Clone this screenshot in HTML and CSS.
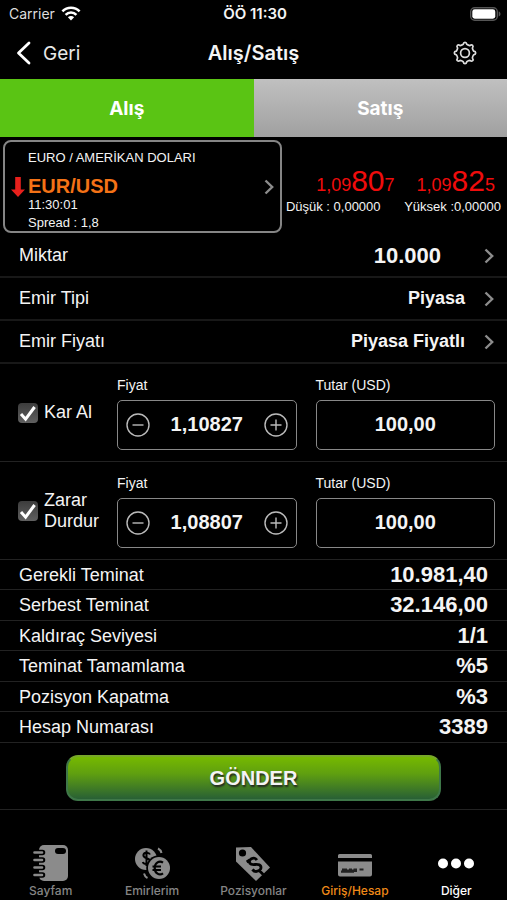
FILE: index.html
```html
<!DOCTYPE html>
<html lang="tr">
<head>
<meta charset="utf-8">
<meta name="viewport" content="width=device-width, initial-scale=1">
<title>Alış/Satış</title>
<link rel="stylesheet" href="styles.css">
</head>
<body>
<div class="status">
  <div class="carrier">Carrier
    <svg width="20" height="15" viewBox="0 0 20 15" fill="none" stroke="#fff" stroke-width="2.6"><path d="M1.4 5.4C6.2.6 13.8.6 18.6 5.4M4.6 8.8c3-3 7.8-3 10.8 0"/><path d="M10 14.4 6.9 11.3c1.7-1.7 4.5-1.7 6.2 0z" fill="#fff" stroke="none"/></svg>
  </div>
  <div class="clock">ÖÖ 11:30</div>
  <svg class="battery" width="31" height="14" viewBox="0 0 31 14"><rect x=".7" y=".7" width="26.6" height="12.6" rx="4" fill="none" stroke="#555" stroke-width="1.4"/><rect x="2.3" y="2.3" width="23" height="9.4" rx="2.4" fill="#fff"/><path d="M28.7 4.6c2.4.6 2.4 4.2 0 4.8z" fill="#555"/></svg>
</div>
<header class="nav">
  <a class="back" href="#"><svg width="15" height="24" viewBox="0 0 15 24" fill="none" stroke="#fff" stroke-width="2.8" stroke-linecap="round" stroke-linejoin="round"><path d="M13 2 2.5 12 13 22"/></svg>Geri</a>
  <h1>Alış/Satış</h1>
  <button class="settings" type="button" aria-label="Ayarlar">
    <svg width="24" height="24" viewBox="0 0 24 24" fill="none" stroke="#ddd" stroke-width="1.7" stroke-linejoin="round"><circle cx="12" cy="12" r="4.4"/><path d="M10.200 3.300Q10.500 1.300 12 1.300Q13.500 1.300 13.800 3.300Q15.300 4.400 16.900 4.600Q18.500 3.400 19.600 4.400Q20.600 5.500 19.400 7.100Q19.600 8.700 20.700 10.200Q22.700 10.500 22.700 12Q22.700 13.500 20.700 13.800Q19.600 15.300 19.400 16.900Q20.600 18.500 19.600 19.600Q18.500 20.600 16.900 19.400Q15.300 19.600 13.800 20.700Q13.500 22.700 12 22.700Q10.500 22.700 10.200 20.700Q8.700 19.600 7.100 19.400Q5.500 20.600 4.400 19.600Q3.400 18.500 4.600 16.900Q4.400 15.300 3.300 13.800Q1.300 13.500 1.300 12Q1.300 10.500 3.300 10.200Q4.400 8.700 4.600 7.100Q3.400 5.500 4.400 4.400Q5.500 3.400 7.100 4.600Q8.700 4.400 10.200 3.300Z"/></svg>
  </button>
</header>
<div class="sides">
  <button class="side buy" type="button">Alış</button>
  <button class="side sell" type="button">Satış</button>
</div>
<main>
  <section class="quote">
    <button class="pair" type="button">
      <svg class="down" width="14" height="20" viewBox="0 0 14 20" fill="#e8201c"><path d="M4.2 0h5.600v12.500H14L7 20 0 12.500h4.200z"/></svg>
      <span class="details">
        <span class="name">EURO / AMERİKAN DOLARI</span>
        <span class="symbol">EUR/USD</span>
        <span class="time">11:30:01</span>
        <span class="spread">Spread : 1,8</span>
      </span>
      <svg class="chev" width="10" height="16" viewBox="0 0 10 16"><path d="M1.500 1.500 8.200 8l-6.700 6.500"/></svg>
    </button>
    <div class="prices">
      <div class="rates"><span>1,09<b>80</b>7</span><span>1,09<b>82</b>5</span></div>
      <div class="limits"><span>Düşük : 0,00000</span><span>Yüksek :0,00000</span></div>
    </div>
  </section>

  <button class="option" type="button"><span>Miktar</span><strong class="amount">10.000</strong><svg class="chev" width="10" height="16" viewBox="0 0 10 16"><path d="M1.500 1.500 8.200 8l-6.700 6.500"/></svg></button>
  <button class="option" type="button"><span>Emir Tipi</span><strong>Piyasa</strong><svg class="chev" width="10" height="16" viewBox="0 0 10 16"><path d="M1.500 1.500 8.200 8l-6.700 6.500"/></svg></button>
  <button class="option" type="button"><span>Emir Fiyatı</span><strong>Piyasa Fiyatlı</strong><svg class="chev" width="10" height="16" viewBox="0 0 10 16"><path d="M1.500 1.500 8.200 8l-6.700 6.500"/></svg></button>

  <section class="trigger">
    <label class="toggle"><span class="box"><input type="checkbox" checked><svg width="20" height="20" viewBox="0 0 20 20"><path d="m3 11 4.600 5.200L16.600 4"/></svg></span>Kar Al</label>
    <div class="field">
      <label for="tp-price">Fiyat</label>
      <div class="entry">
        <button type="button" aria-label="Azalt"><svg width="24" height="24" viewBox="0 0 24 24"><circle cx="12" cy="12" r="11"/><path d="M6.500 12h11"/></svg></button>
        <input id="tp-price" type="text" value="1,10827">
        <button type="button" aria-label="Artır"><svg width="24" height="24" viewBox="0 0 24 24"><circle cx="12" cy="12" r="11"/><path d="M6.500 12h11M12 6.500v11"/></svg></button>
      </div>
    </div>
    <div class="field">
      <label for="tp-sum">Tutar (USD)</label>
      <div class="entry"><input id="tp-sum" type="text" value="100,00"></div>
    </div>
  </section>
  <section class="trigger">
    <label class="toggle"><span class="box"><input type="checkbox" checked><svg width="20" height="20" viewBox="0 0 20 20"><path d="m3 11 4.600 5.200L16.600 4"/></svg></span>Zarar Durdur</label>
    <div class="field">
      <label for="sl-price">Fiyat</label>
      <div class="entry">
        <button type="button" aria-label="Azalt"><svg width="24" height="24" viewBox="0 0 24 24"><circle cx="12" cy="12" r="11"/><path d="M6.500 12h11"/></svg></button>
        <input id="sl-price" type="text" value="1,08807">
        <button type="button" aria-label="Artır"><svg width="24" height="24" viewBox="0 0 24 24"><circle cx="12" cy="12" r="11"/><path d="M6.500 12h11M12 6.500v11"/></svg></button>
      </div>
    </div>
    <div class="field">
      <label for="sl-sum">Tutar (USD)</label>
      <div class="entry"><input id="sl-sum" type="text" value="100,00"></div>
    </div>
  </section>

  <table class="summary">
    <tr><th scope="row">Gerekli Teminat</th><td>10.981,40</td></tr>
    <tr><th scope="row">Serbest Teminat</th><td>32.146,00</td></tr>
    <tr><th scope="row">Kaldıraç Seviyesi</th><td>1/1</td></tr>
    <tr><th scope="row">Teminat Tamamlama</th><td>%5</td></tr>
    <tr><th scope="row">Pozisyon Kapatma</th><td>%3</td></tr>
    <tr><th scope="row">Hesap Numarası</th><td>3389</td></tr>
  </table>
  <div class="submit"><button type="submit">GÖNDER</button></div>
</main>
<nav class="tabs">
  <a href="#">
    <svg width="36" height="38" viewBox="0 0 36 38"><rect x="6" y="1" width="29" height="36" rx="5" fill="#8b8b8b"/><rect x="22" y="4" width="11" height="6" rx="3" fill="#000"/><g fill="none" stroke="#000" stroke-width="5.500" stroke-linecap="round"><path d="M5 8.500h4.500M5 16h4.500M5 23.500h4.500M5 31h4.500"/></g><g fill="none" stroke="#8b8b8b" stroke-width="2.600" stroke-linecap="round"><path d="M1.500 8.500H9M1.500 16H9M1.500 23.500H9M1.500 31H9"/></g></svg>
    Sayfam</a>
  <a href="#">
    <svg width="36" height="38" viewBox="0 0 36 38"><circle cx="12" cy="15" r="11" fill="#8b8b8b"/><path d="M16 10.500c-1-2.600-6.600-2.600-6.600.8 0 3.800 6.600 2 6.600 5.900 0 3.600-6.200 3.800-7.200.8M12.500 6.500v15.500" fill="none" stroke="#000" stroke-width="2"/><circle cx="25" cy="24" r="12.800" fill="#000"/><circle cx="25" cy="24" r="11" fill="#8b8b8b"/><path d="M29 18.700c-3.600-2.600-8.300 0-8.300 5.300s4.700 7.900 8.300 5.300M18.500 22.500h8.500M18.500 26h8.500" fill="none" stroke="#000" stroke-width="2.200"/><path d="M24 4.500c2 1 3 2.500 3.500 4.500M10 29.500c.5 2 1.500 3.500 3.500 4.500" fill="none" stroke="#8b8b8b" stroke-width="2"/></svg>
    Emirlerim</a>
  <a href="#">
    <svg width="36" height="38" viewBox="0 0 36 38"><path d="M1 3.500 16 3l19 20.500L21 37 1 17.500z" fill="#8b8b8b"/><circle cx="7.500" cy="9" r="3.600" fill="#000"/><path d="M22.800 14.500c-3.200-4-9.400-.2-7 3.400 2 3 8.600-1 10.600 2.600 2 4-4.600 7.800-8.200 3.500M12.500 16.500l3-2M25 25l4 4" transform="translate(-.8 1.500)" fill="none" stroke="#000" stroke-width="2.800"/></svg>
    Pozisyonlar</a>
  <a class="current" href="#">
    <svg width="36" height="38" viewBox="0 0 36 38"><path d="M1 14v-2.500A1.500 1.500 0 0 1 2.500 10h31a1.500 1.500 0 0 1 1.500 1.500V14zM1 17.500h34v13a2 2 0 0 1-2 2H3a2 2 0 0 1-2-2z" fill="#8b8b8b"/><path d="M4 26.500h1v-2h5v1h2v-1h3v1h1.500v-1H20v3.500h-3v.8H4zM22.500 24.500h4v2h-4z" fill="#222"/></svg>
    Giriş/Hesap</a>
  <a class="more" href="#">
    <svg width="36" height="38" viewBox="0 0 36 38" fill="#fff"><circle cx="5" cy="19.500" r="5"/><circle cx="18" cy="19.500" r="5"/><circle cx="31" cy="19.500" r="5"/></svg>
    Diğer</a>
</nav>
</body>
</html>
```
FILE: styles.css
```css
* { box-sizing: border-box; }

body {
  margin: 0;
  min-height: 100vh;
  display: flex;
  flex-direction: column;
  background: #000;
  color: #f4f4f4;
  font-family: "Liberation Sans", Arial, sans-serif;
}

button, input {
  margin: 0;
  padding: 0;
  border: 0;
  background: none;
  color: inherit;
  font: inherit;
}

a { color: inherit; text-decoration: none; }
svg { display: block; flex: none; }

.status, .nav, .sides, .tabs { font-family: Inter, sans-serif; }

.status {
  display: grid;
  grid-template-columns: 1fr auto 1fr;
  align-items: center;
  height: 27px;
  padding: 0 6px 0 9px;
  font-size: 14px;
  line-height: 20px;
}
.carrier { display: flex; align-items: center; gap: 6px; color: #ddd; }
.clock { font-size: 15px; font-weight: 600; }
.battery { justify-self: end; }

.nav {
  display: grid;
  grid-template-columns: 1fr auto 1fr;
  align-items: center;
  height: 52px;
  padding: 0 16px;
  font-size: 19px;
}
.back { display: flex; align-items: center; gap: 12px; color: #e8e8e8; }
.nav h1 { margin: 0; font-size: 20px; font-weight: 600; }
.settings { justify-self: end; margin-right: 14px; }

.sides { display: grid; grid-template-columns: 1fr 1fr; height: 58px; }
.side { color: #fff; font-size: 19px; font-weight: 700; }
.buy { background: #5ac414; }
.sell { background: linear-gradient(#c0c0c0, #a0a0a0); }

main { padding-top: 3px; }

.quote { display: flex; align-items: center; padding: 0 6px 0 3px; margin-bottom: 2px; }
.pair {
  flex: none;
  display: flex;
  align-items: center;
  width: 56%;
  height: 93px;
  padding: 0 6px;
  gap: 3px;
  border: 2px solid #858585;
  border-radius: 8px;
  text-align: left;
}
.details { display: flex; flex: 1; flex-direction: column; padding-top: 9px; font-size: 13px; line-height: 18px; }
.symbol { color: #f47216; font-size: 20px; font-weight: 700; line-height: 22px; margin-top: 8px; }
.time { line-height: 16px; }
.spread { line-height: 20px; }
.chev path { fill: none; stroke: #8c8c8c; stroke-width: 2.4; }

.prices { flex: 1; padding: 8px 0 0 4px; white-space: nowrap; }
.rates {
  display: flex;
  justify-content: flex-end;
  gap: 22px;
  padding-right: 6px;
  color: #f00c0c;
  font-size: 18px;
  line-height: 28px;
}
.rates b { font-size: 30px; font-weight: 400; }
.limits { display: flex; justify-content: space-between; font-size: 13px; line-height: 16px; }

.option {
  display: flex;
  align-items: center;
  width: 100%;
  height: 43px;
  padding: 0 13px 0 19px;
  border-bottom: 2px solid #181818;
  font-size: 18px;
}
.option strong { flex: 1; margin-right: 19px; text-align: right; }
.option .amount { margin-right: 43px; font-size: 22px; }

.trigger {
  display: grid;
  grid-template-columns: 80px 1fr 1fr;
  column-gap: 19px;
  align-items: center;
  height: 98px;
  padding: 0 12px 0 18px;
  border-bottom: 1px solid #222;
}
.toggle { display: flex; align-items: center; gap: 6px; font-size: 18px; line-height: 21px; }
.box { display: grid; flex: none; }
.box input, .box svg { grid-area: 1 / 1; width: 20px; height: 20px; }
.box input { appearance: none; border-radius: 4px; background: linear-gradient(#3c3c3c, #606060); }
.box svg { pointer-events: none; fill: none; stroke: #fff; stroke-width: 3; }
.field { min-width: 0; }
.field label { display: block; font-size: 14px; line-height: 18px; padding-bottom: 6px; }
.entry {
  display: flex;
  align-items: center;
  height: 50px;
  padding: 0 8px;
  border: 1px solid #888;
  border-radius: 5px;
}
.entry input { flex: 1; width: 0; min-width: 0; font-size: 20px; font-weight: 700; text-align: center; }
.entry svg { fill: none; stroke: #bbb; stroke-width: 1.4; }

.summary { width: 100%; height: 183px; border-collapse: collapse; }
.summary tr { border-bottom: 1px solid #222; }
.summary th, .summary td { padding: 0 19px; line-height: 26px; }
.summary th { font-size: 18px; font-weight: 400; text-align: left; }
.summary td { font-size: 22px; font-weight: 700; text-align: right; }

.submit { display: flex; justify-content: center; padding: 12px 0 8px; border-bottom: 1px solid #222; }
.submit button {
  width: 74%;
  height: 46px;
  border: 2px solid #3e7748;
  border-top-color: #78a829;
  border-radius: 12px;
  background: linear-gradient(#76b900, #5f9f10 40%, #286035);
  font-size: 20px;
  font-weight: 700;
  text-shadow: 1px 2px 2px #222;
}

.tabs { display: grid; grid-template-columns: repeat(5, 1fr); margin-top: auto; padding-bottom: 1px; }
.tabs a { display: flex; flex-direction: column; align-items: center; gap: 1px; color: #858585; font-size: 12px; font-weight: 500; line-height: 16px; }
.tabs .current { color: #f08a18; }
.tabs .more { color: #fff; }
```
